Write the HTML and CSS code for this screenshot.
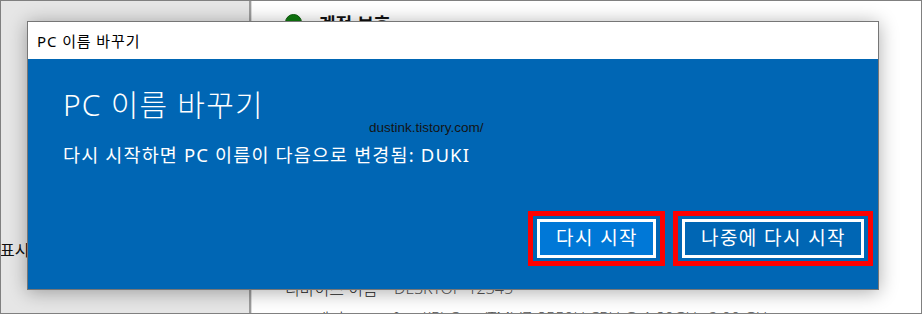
FILE: index.html
```html
<!DOCTYPE html>
<html lang="ko">
<head>
<meta charset="utf-8">
<title>PC 이름 바꾸기</title>
<link rel="stylesheet" href="styles.css">
</head>
<body>
<div class="screen">
  <div class="left-pane">
    <div class="left-label">표시</div>
  </div>
  <div class="divider"></div>
  <div class="right-pane">
    <div class="status-row">
      <span class="status-dot"></span>
      <span class="status-title">계정 보호</span>
    </div>
    <div class="spec-list">
      <div class="spec-row"><span class="spec-key">디바이스 이름</span><span class="spec-val">DESKTOP-12345</span></div>
      <div class="spec-row"><span class="spec-key">프로세서</span><span class="spec-val">Intel(R) Core(TM) i7-8550U CPU @ 1.80GHz 2.00 GHz</span></div>
    </div>
  </div>

  <div class="dialog">
    <div class="dialog-titlebar">PC 이름 바꾸기</div>
    <div class="dialog-body">
      <h1 class="dialog-heading">PC 이름 바꾸기</h1>
      <p class="dialog-text">다시 시작하면 PC 이름이 다음으로 변경됨: DUKI</p>
      <div class="dialog-actions">
        <div class="mark"><button class="btn btn-primary">다시 시작</button></div>
        <div class="mark"><button class="btn btn-secondary">나중에 다시 시작</button></div>
      </div>
    </div>
    <div class="watermark">dustink.tistory.com/</div>
  </div>
</div>
</body>
</html>
```

FILE: styles.css
```css
* { box-sizing: border-box; }
html, body { margin: 0; padding: 0; }
body {
  width: 922px;
  height: 314px;
  overflow: hidden;
  font-family: "Noto Sans", "Noto Sans CJK KR", sans-serif;
  background: #ffffff;
}
.screen {
  position: relative;
  width: 922px;
  height: 314px;
  border: 1px solid #808080;
  display: flex;
  overflow: hidden;
}
.left-pane {
  width: 248px;
  flex: none;
  background: #e6e6e6;
  position: relative;
  display: flex;
  flex-direction: column;
  padding-top: 237px;
}
.left-label {
  font-family: "Noto Sans CJK KR", sans-serif;
  font-size: 16px;
  line-height: 22px;
  color: #111;
  margin-left: -1px;
}
.divider {
  width: 3px;
  flex: none;
  background: linear-gradient(to right, #9c9c9c 0, #9c9c9c 2px, #dcdcdc 2px);
}
.right-pane {
  flex: 1;
  background: #ffffff;
  display: flex;
  flex-direction: column;
  padding-left: 33px;
}
.status-row {
  display: flex;
  align-items: flex-start;
  gap: 17px;
  padding-top: 13px;
}
.status-dot {
  width: 17px;
  height: 17px;
  border-radius: 50%;
  background: #107c10;
  border: 1px solid #0b5a0b;
  flex: none;
}
.status-title {
  font-family: "Noto Sans CJK KR", sans-serif;
  font-weight: 700;
  font-size: 18px;
  line-height: 18px;
  color: #111;
}
.spec-list {
  margin-top: 245px;
  display: flex;
  flex-direction: column;
}
.spec-row {
  display: flex;
  height: 30px;
  font-size: 16px;
  line-height: 22px;
  color: #222;
  font-weight: 300;
}
.spec-key { width: 109px; flex: none; font-family: "Noto Sans CJK KR", sans-serif; }
.spec-val { color: #555; white-space: nowrap; }

/* dialog */
.dialog {
  position: absolute;
  left: 26px;
  top: 20px;
  width: 852px;
  height: 269px;
  border: 1px solid #767676;
  background: #0066b4;
  box-shadow: 0 2px 18px rgba(0, 0, 0, 0.33);
  display: flex;
  flex-direction: column;
}
.dialog-titlebar {
  height: 37px;
  flex: none;
  background: #ffffff;
  color: #000;
  font-size: 15px;
  letter-spacing: 0.9px;
  display: flex;
  align-items: center;
  padding-left: 9px;
  padding-bottom: 1px;
}
.dialog-body {
  flex: 1;
  padding: 26px 5px 23px 35px;
  display: flex;
  flex-direction: column;
  color: #ffffff;
}
.dialog-heading {
  margin: 0;
  font-size: 30px;
  font-weight: 300;
  line-height: 40px;
  letter-spacing: 1.2px;
}
.dialog-text {
  margin: 17px 0 0;
  font-size: 18.5px;
  line-height: 26px;
  letter-spacing: 1.15px;
}
.dialog-actions {
  margin-top: auto;
  display: flex;
  justify-content: flex-end;
  gap: 8px;
}
.mark {
  border: 5px solid #ff0000;
  padding: 3px 4px;
  display: flex;
}
.btn {
  font-family: "Noto Sans", "Noto Sans CJK KR", sans-serif;
  font-size: 19px;
  letter-spacing: 1.4px;
  color: #ffffff;
  border: 3px solid #ffffff;
  height: 39px;
  padding: 0 0 0 1px;
  display: flex;
  align-items: center;
  justify-content: center;
  line-height: 1;
}
.btn-primary { width: 119px; background: #0078d7; }
.btn-secondary { width: 182px; background: #0066b4; }
.watermark {
  position: absolute;
  left: 341px;
  top: 98px;
  font-family: "Liberation Sans", sans-serif;
  font-size: 13.5px;
  color: #141414;
}
```
